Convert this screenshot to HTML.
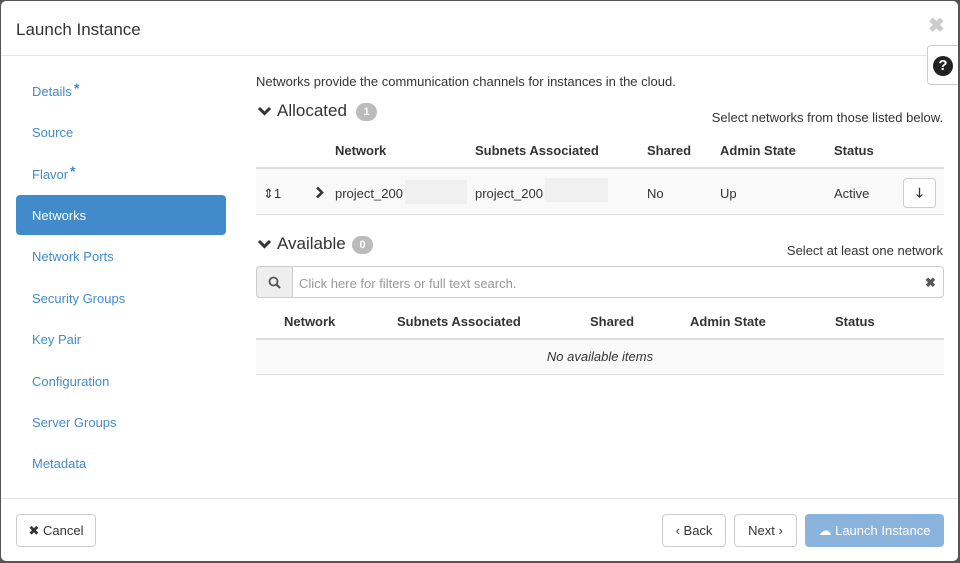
<!DOCTYPE html>
<html><head><style>
*{box-sizing:border-box;margin:0;padding:0}
body{width:960px;height:563px;background:#555;font-family:"Liberation Sans",sans-serif;font-size:13px;color:#333;position:relative;overflow:hidden}
.modal{position:absolute;left:1px;top:1px;width:957px;height:560px;background:#fff;border-radius:5px;overflow:hidden}
.a{position:absolute;white-space:nowrap}
.hdr{left:15px;top:19px;font-size:17px;color:#333}
.line{position:absolute;height:1px;background:#e5e5e5}
.nav{left:31px;color:#428bca;font-size:13px}
.star{position:absolute;color:#428bca;font-size:14px;font-weight:bold}
.act{position:absolute;left:15px;top:194px;width:210px;height:40px;background:#428bca;border-radius:4px}
.th{font-weight:bold;font-size:13px}
.badge{position:absolute;background:#bbb;color:#fff;border-radius:10px;font-size:11px;font-weight:bold;width:21px;height:18px;text-align:center;line-height:18px}
.h3{font-size:17px;color:#333}
.btn{position:absolute;border:1px solid #ccc;border-radius:4px;background:#fff;height:33px;line-height:31px;text-align:center;font-size:13px;color:#333}
</style></head><body>
<div class="modal">
<div class="a hdr">Launch Instance</div>
<div class="a" style="left:927px;top:12px;font-size:20px;color:#ccc;font-weight:bold">✖</div>
<div class="line" style="left:0;top:54px;width:957px"></div>
<div class="a" style="left:926px;top:44px;width:32px;height:40px;border:1px solid #ccc;border-right:none;border-radius:4px 0 0 4px;background:#fff"></div>
<div class="a" style="left:932px;top:55px;width:20px;height:20px;border-radius:50%;background:#222;color:#fff;font-weight:bold;font-size:15px;text-align:center;line-height:20px">?</div>

<div class="act"></div>
<div class="a nav" style="top:83px">Details</div><div class="star" style="left:73px;top:79px">*</div>
<div class="a nav" style="top:124px">Source</div>
<div class="a nav" style="top:166px">Flavor</div><div class="star" style="left:69px;top:162px">*</div>
<div class="a nav" style="top:207px;color:#fff">Networks</div>
<div class="a nav" style="top:248px">Network Ports</div>
<div class="a nav" style="top:290px">Security Groups</div>
<div class="a nav" style="top:331px">Key Pair</div>
<div class="a nav" style="top:373px">Configuration</div>
<div class="a nav" style="top:414px">Server Groups</div>
<div class="a nav" style="top:455px">Metadata</div>

<div class="a" style="left:255px;top:73px">Networks provide the communication channels for instances in the cloud.</div>
<svg class="a" style="left:256px;top:104px" width="15" height="12" viewBox="0 0 15 12"><path d="M2 3 L7.5 8.5 L13 3" fill="none" stroke="#333" stroke-width="3"/></svg>
<div class="a h3" style="left:276px;top:100px">Allocated</div><span class="badge" style="left:355px;top:102px">1</span>
<div class="a" style="right:15px;top:109px">Select networks from those listed below.</div>
<div class="a th" style="left:334px;top:142px">Network</div>
<div class="a th" style="left:474px;top:142px">Subnets Associated</div>
<div class="a th" style="left:646px;top:142px">Shared</div>
<div class="a th" style="left:719px;top:142px">Admin State</div>
<div class="a th" style="left:833px;top:142px">Status</div>
<div class="a" style="left:255px;top:166px;width:688px;height:48px;background:#f9f9f9;border-top:2px solid #ddd;border-bottom:1px solid #ddd"></div>
<div class="a" style="left:262px;top:185px">⇕1</div>
<svg class="a" style="left:314px;top:185px" width="10" height="13" viewBox="0 0 10 13"><path d="M2 1.5 L7 6.5 L2 11.5" fill="none" stroke="#333" stroke-width="2.6"/></svg>
<div class="a" style="left:334px;top:185px">project_200</div>
<div class="a" style="left:404px;top:179px;width:62px;height:24px;background:#f0f0f0"></div>
<div class="a" style="left:474px;top:185px">project_200</div>
<div class="a" style="left:544px;top:177px;width:63px;height:24px;background:#f0f0f0"></div>
<div class="a" style="left:646px;top:185px">No</div>
<div class="a" style="left:719px;top:185px">Up</div>
<div class="a" style="left:833px;top:185px">Active</div>
<div class="btn" style="left:902px;top:177px;width:33px;height:30px;line-height:28px;font-weight:bold">🡓</div>

<svg class="a" style="left:256px;top:237px" width="15" height="12" viewBox="0 0 15 12"><path d="M2 3 L7.5 8.5 L13 3" fill="none" stroke="#333" stroke-width="3"/></svg>
<div class="a h3" style="left:276px;top:233px">Available</div><span class="badge" style="left:351px;top:235px">0</span>
<div class="a" style="right:15px;top:242px">Select at least one network</div>
<div class="a" style="left:255px;top:265px;width:688px;height:32px;border:1px solid #ccc;border-radius:4px"></div>
<div class="a" style="left:255px;top:265px;width:37px;height:32px;border:1px solid #ccc;border-radius:4px 0 0 4px;background:#eee"></div>
<svg class="a" style="left:267px;top:275px" width="13" height="13" viewBox="0 0 13 13"><circle cx="5.5" cy="5.5" r="4" fill="none" stroke="#555" stroke-width="1.8"/><path d="M8.5 8.5 L12 12" stroke="#555" stroke-width="2.2"/></svg>
<div class="a" style="left:298px;top:275px;color:#999">Click here for filters or full text search.</div>
<div class="a" style="left:924px;top:274px;color:#555;font-weight:bold">✖</div>
<div class="a th" style="left:283px;top:313px">Network</div>
<div class="a th" style="left:396px;top:313px">Subnets Associated</div>
<div class="a th" style="left:589px;top:313px">Shared</div>
<div class="a th" style="left:689px;top:313px">Admin State</div>
<div class="a th" style="left:834px;top:313px">Status</div>
<div class="a" style="left:255px;top:337px;width:688px;height:37px;background:#f9f9f9;border-top:2px solid #ddd;border-bottom:1px solid #ddd;text-align:center;line-height:34px;font-style:italic">No available items</div>

<div class="line" style="left:0;top:497px;width:957px"></div>
<div class="btn" style="left:15px;top:513px;width:80px">✖ Cancel</div>
<div class="btn" style="left:661px;top:513px;width:64px">‹ Back</div>
<div class="btn" style="left:733px;top:513px;width:63px">Next ›</div>
<div class="btn" style="left:804px;top:513px;width:139px;background:#8ab4dd;border-color:#8ab4dd;color:#fff">☁ Launch Instance</div>
</div>
</body></html>
